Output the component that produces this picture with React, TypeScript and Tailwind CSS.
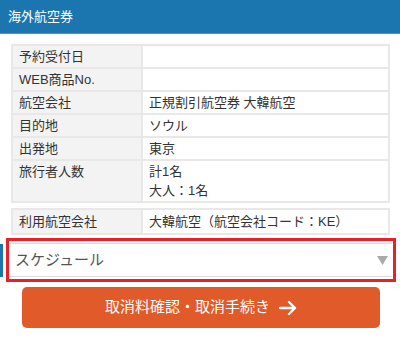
import React from "react";

const font = { fontFamily: '"Liberation Sans", "Noto Sans CJK JP", sans-serif' };

function Row({ label, children, first }: { label: string; children?: React.ReactNode; first?: boolean }) {
  return (
    <div className={`flex ${first ? "" : "border-t-2 border-[#e8e8e8]"}`}>
      <div className="w-[130px] shrink-0 bg-[#f3f3f3] border-r-2 border-[#e8e8e8] pl-[6px] py-[1px] leading-[19px]">
        {label}
      </div>
      <div className="flex-1 pl-[6px] py-[1px] leading-[19px] bg-white">{children}</div>
    </div>
  );
}

export default function App() {
  return (
    <div className="w-[400px] h-[340px] bg-white text-[13px] text-[#333] relative overflow-hidden" style={font}>
      <div className="h-[34px] bg-[#1b76b0] border-b border-[#4a93c4] flex items-center pl-[8px] text-white text-[13px]">
        海外航空券
      </div>
      <div className="mt-[10px] ml-[11px] w-[379px] border-2 border-[#e8e8e8]">
        <Row label="予約受付日" first />
        <Row label="WEB商品No." />
        <Row label="航空会社">正規割引航空券 大韓航空</Row>
        <Row label="目的地">ソウル</Row>
        <Row label="出発地">東京</Row>
        <Row label="旅行者人数">
          <div>計1名</div>
          <div>大人：1名</div>
        </Row>
      </div>
      <div className="mt-[5px] ml-[11px] w-[379px] border-2 border-[#e8e8e8]">
        <div className="flex">
          <div className="w-[130px] shrink-0 bg-[#f3f3f3] border-r-2 border-[#e8e8e8] pl-[6px] py-[2px] leading-[19px]">
            利用航空会社
          </div>
          <div className="flex-1 pl-[6px] py-[2px] leading-[19px]">大韓航空（航空会社コード：KE）</div>
        </div>
      </div>
      <div className="relative mt-[3px] h-[44px] flex items-center">
        <div className="w-[3px] h-[33px] bg-[#1b76b0]" />
        <div className="ml-[6px] w-[383px] h-[34px] border-y border-[#dcdcdc] flex items-center justify-between pl-[6px] pr-[4px] text-[15px] text-[#555]">
          <span>スケジュール</span>
          <svg width="11" height="9" viewBox="0 0 11 9">
            <polygon points="0,0 11,0 5.5,9" fill="#aaaaaa" />
          </svg>
        </div>
        <div className="absolute left-[6px] top-0 w-[390px] h-[44px] border-[3px] border-[#e8202a]" />
      </div>
      <div className="mt-[5px] ml-[22px] w-[358px] h-[41px] rounded-[5px] bg-[#e05a2a] flex items-center justify-center text-white text-[15px] gap-[9px]">
        <span>取消料確認・取消手続き</span>
        <svg width="18" height="16" viewBox="0 0 18 16" fill="none" stroke="white" strokeWidth="2.4" strokeLinecap="round" strokeLinejoin="round">
          <path d="M1 8 H16 M10 2 L16 8 L10 14" />
        </svg>
      </div>
    </div>
  );
}
